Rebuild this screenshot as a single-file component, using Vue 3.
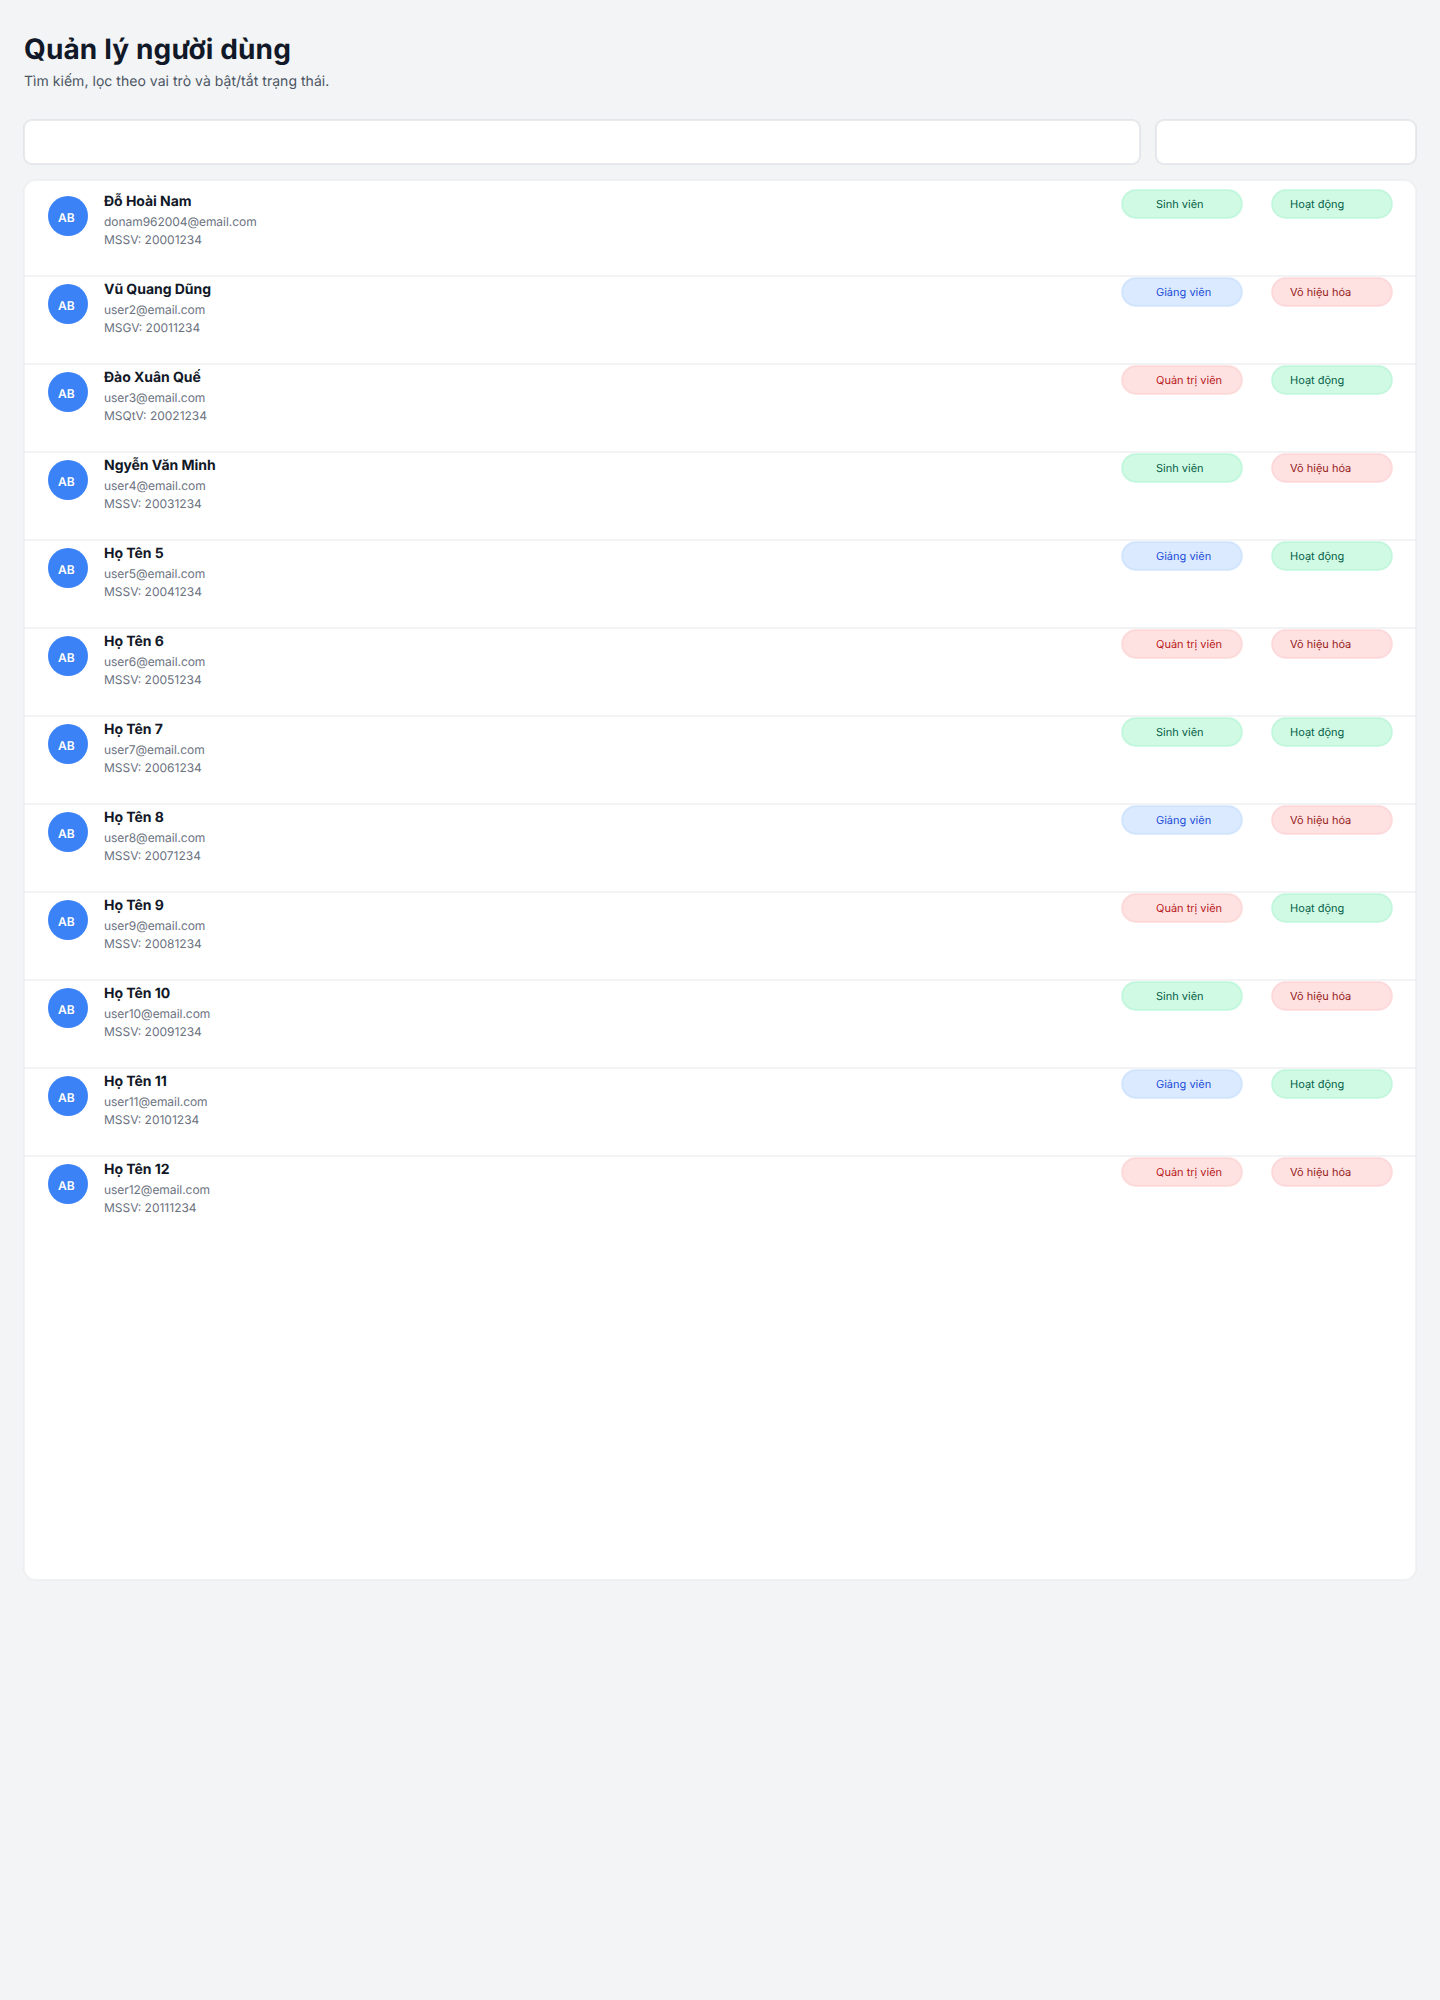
<script setup>
const roles = {
  student: { label: 'Sinh viên', tone: 'green' },
  teacher: { label: 'Giảng viên', tone: 'blue' },
  admin: { label: 'Quản trị viên', tone: 'red' },
}

const users = [
  { name: 'Đỗ Hoài Nam', email: 'donam962004@email.com', code: 'MSSV: 20001234', role: 'student', active: true },
  { name: 'Vũ Quang Dũng', email: 'user2@email.com', code: 'MSGV: 20011234', role: 'teacher', active: false },
  { name: 'Đào Xuân Quế', email: 'user3@email.com', code: 'MSQtV: 20021234', role: 'admin', active: true },
  { name: 'Ngyễn Văn Minh', email: 'user4@email.com', code: 'MSSV: 20031234', role: 'student', active: false },
  { name: 'Họ Tên 5', email: 'user5@email.com', code: 'MSSV: 20041234', role: 'teacher', active: true },
  { name: 'Họ Tên 6', email: 'user6@email.com', code: 'MSSV: 20051234', role: 'admin', active: false },
  { name: 'Họ Tên 7', email: 'user7@email.com', code: 'MSSV: 20061234', role: 'student', active: true },
  { name: 'Họ Tên 8', email: 'user8@email.com', code: 'MSSV: 20071234', role: 'teacher', active: false },
  { name: 'Họ Tên 9', email: 'user9@email.com', code: 'MSSV: 20081234', role: 'admin', active: true },
  { name: 'Họ Tên 10', email: 'user10@email.com', code: 'MSSV: 20091234', role: 'student', active: false },
  { name: 'Họ Tên 11', email: 'user11@email.com', code: 'MSSV: 20101234', role: 'teacher', active: true },
  { name: 'Họ Tên 12', email: 'user12@email.com', code: 'MSSV: 20111234', role: 'admin', active: false },
]
</script>

<template>
  <main class="page">
    <header class="head">
      <h1>Quản lý người dùng</h1>
      <p>Tìm kiếm, lọc theo vai trò và bật/tắt trạng thái.</p>
    </header>

    <div class="filters">
      <div class="field search"></div>
      <div class="field select"></div>
    </div>

    <section class="card">
      <article v-for="user in users" :key="user.email" class="row">
        <div class="avatar">AB</div>
        <div class="info">
          <div class="name">{{ user.name }}</div>
          <div class="meta email">{{ user.email }}</div>
          <div class="meta">{{ user.code }}</div>
        </div>
        <div class="pill role" :class="roles[user.role].tone">{{ roles[user.role].label }}</div>
        <div class="pill status" :class="user.active ? 'green' : 'red dark'">
          {{ user.active ? 'Hoạt động' : 'Vô hiệu hóa' }}
        </div>
      </article>
    </section>
  </main>
</template>

<style>
body {
  background: #f3f4f6;
}
</style>

<style scoped>
.page {
  box-sizing: border-box;
  width: 1440px;
  height: 2000px;
  padding: 30px 24px 0;
  background: #f3f4f6;
  font-family: Inter, 'Noto Sans', sans-serif;
  text-rendering: geometricPrecision;
  color: #111827;
}

.head {
  height: 90px;
}

h1 {
  margin: 0;
  font-size: 28px;
  font-weight: 700;
  line-height: 38px;
  letter-spacing: 0.14px;
}

p {
  margin: 4px 0 0;
  font-size: 14px;
  line-height: 20px;
  letter-spacing: 0.035px;
  color: #4b5563;
}

.filters {
  display: flex;
  gap: 16px;
  margin-bottom: 16px;
}

/* hairlines are centred on the box edge: half outside, half inside */
.field,
.card,
.pill {
  box-shadow: 0 0 0 1px var(--line), inset 0 0 0 1px var(--line);
}

.field {
  --line: rgba(209, 213, 219, 0.5);
  height: 44px;
  border-radius: 8px;
  background: #fff;
}

.search {
  flex: 1;
}

.select {
  width: 260px;
}

.card {
  --line: rgba(229, 231, 235, 0.5);
  box-sizing: border-box;
  height: 1400px;
  padding-top: 8px;
  border-radius: 12px;
  background: #fff;
}

.row {
  box-sizing: border-box;
  display: flex;
  align-items: flex-start;
  height: 88px;
  padding: 2px 24px 0;
}

.row:not(:last-child) {
  box-shadow: 0 1px 0 rgba(229, 231, 235, 0.5), inset 0 -1px 0 rgba(229, 231, 235, 0.5);
}

.avatar {
  box-sizing: border-box;
  width: 40px;
  height: 40px;
  margin-top: 6px;
  padding: 13px 0 0 10px;
  border-radius: 50%;
  background: #3b82f6;
  color: #fff;
  font-size: 12px;
  font-weight: 600;
  line-height: 18px;
}

.info {
  flex: 1;
  margin: 2px 0 0 16px;
}

.name {
  font-size: 14px;
  font-weight: 700;
  line-height: 20px;
  letter-spacing: -0.04px;
}

.meta {
  font-size: 12px;
  line-height: 18px;
  color: #6b7280;
}

.email {
  margin-top: 1px;
  letter-spacing: -0.05px;
}

.pill {
  box-sizing: border-box;
  width: 120px;
  height: 28px;
  border-radius: 14px;
  font-size: 11px;
  line-height: 28px;
}

.role {
  padding-left: 34px;
}

.status {
  margin-left: 30px;
  padding-left: 18px;
}

.green {
  --line: rgba(167, 243, 208, 0.5);
  background: #d1fae5;
  color: #065f46;
}

.blue {
  --line: rgba(191, 219, 254, 0.5);
  background: #dbeafe;
  color: #1d4ed8;
}

.red {
  --line: rgba(254, 202, 202, 0.5);
  background: #fee2e2;
  color: #b91c1c;
}

.dark {
  color: #991b1b;
}
</style>
